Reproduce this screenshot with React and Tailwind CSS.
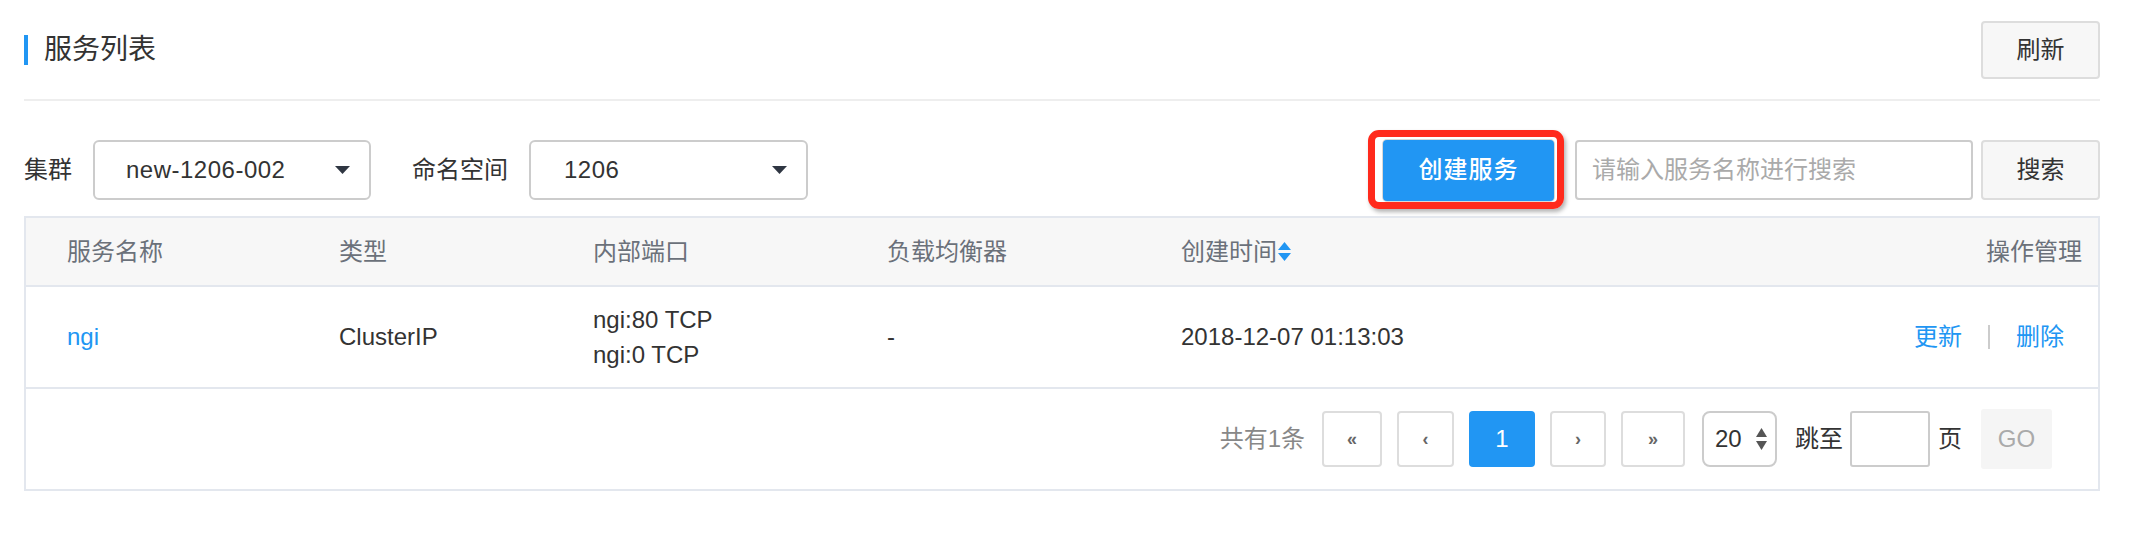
import React from "react";

const Caret = () => (
    <svg width="15" height="8" viewBox="0 0 15 8">
        <polygon points="0,0 15,0 7.5,8" fill="#2f3642" />
    </svg>
);

const SortIcon = () => (
    <svg width="13" height="20" viewBox="0 0 13 20" className="ml-[1px]">
        <polygon points="6.5,0 13,8 0,8" fill="#2196f3" />
        <polygon points="0,11 13,11 6.5,19" fill="#2196f3" />
    </svg>
);

const Spinner = () => (
    <svg width="11" height="22" viewBox="0 0 11 22">
        <polygon points="5.5,0 11,9 0,9" fill="#555" />
        <polygon points="0,13 11,13 5.5,22" fill="#555" />
    </svg>
);

const PageBtn = ({ children, w, active }) => (
    <div
        className={`h-[56px] flex items-center justify-center rounded-[4px] ${
            active
                ? "bg-[#2196f3] text-white text-[24px]"
                : "border-2 border-[#dddddd] text-[#666] text-[18px] font-bold"
        }`}
        style={{ width: w }}
    >
        {children}
    </div>
);

const App = () => {
    return (
        <div className="w-[2130px] h-[538px] bg-white pl-[24px] pr-[30px] font-['Liberation_Sans','Noto_Sans_CJK_SC',sans-serif] text-[#333]">
            {/* title */}
            <div className="flex items-center justify-between pt-[21px]">
                <div className="flex items-center">
                    <div className="w-[4px] h-[30px] bg-[#2196f3]" />
                    <h1 className="ml-[16px] text-[28px] leading-none text-[#333]">服务列表</h1>
                </div>
                <button className="w-[119px] h-[58px] bg-[#f7f7f7] border-2 border-[#dddddd] rounded-[4px] text-[24px] text-[#333]">
                    刷新
                </button>
            </div>
            <div className="mt-[20px] h-[2px] bg-[#eeeeee]" />

            {/* filters */}
            <div className="mt-[39px] h-[60px] flex items-center">
                <span className="text-[24px] leading-none">集群</span>
                <div className="ml-[21px] w-[278px] h-[60px] border-2 border-[#cccccc] rounded-[6px] flex items-center justify-between pl-[31px] pr-[19px]">
                    <span className="text-[24px] tracking-[0.5px]">new-1206-002</span>
                    <Caret />
                </div>
                <span className="ml-[41px] text-[24px] leading-none">命名空间</span>
                <div className="ml-[21px] w-[279px] h-[60px] border-2 border-[#cccccc] rounded-[6px] flex items-center justify-between pl-[33px] pr-[19px]">
                    <span className="text-[24px] tracking-[0.5px]">1206</span>
                    <Caret />
                </div>
                <div className="flex-1" />
                <div className="relative">
                    <button className="w-[171px] h-[61px] bg-[#2196f3] rounded-[4px] text-white text-[24px] font-medium tracking-[1px] shadow-[0_0_0_1px_#d8d8d8]">
                        创建服务
                    </button>
                    <div className="absolute -left-[15px] -top-[10px] -right-[10px] -bottom-[8px] border-[7px] border-[#ff2a1c] rounded-[11px] shadow-[2px_3px_4px_rgba(0,0,0,0.3)] pointer-events-none" />
                </div>
                <div className="ml-[21px] w-[398px] h-[60px] border-2 border-[#cccccc] rounded-[4px] flex items-center pl-[15px]">
                    <span className="text-[24px] text-[#aaaaaa]">请输入服务名称进行搜索</span>
                </div>
                <button className="ml-[8px] w-[119px] h-[60px] bg-[#f7f7f7] border-2 border-[#dddddd] rounded-[4px] text-[24px] text-[#333]">
                    搜索
                </button>
            </div>

            {/* table */}
            <div className="mt-[16px] border-2 border-[#e3e7ee]">
                <div className="h-[69px] bg-[#f7f7f7] border-b-2 border-[#e3e7ee] flex items-center pl-[41px] pr-[16px] text-[24px] text-[#6b717a]">
                    <div className="w-[272px]">服务名称</div>
                    <div className="w-[254px]">类型</div>
                    <div className="w-[294px]">内部端口</div>
                    <div className="w-[294px]">负载均衡器</div>
                    <div className="flex-1 flex items-center">
                        创建时间
                        <SortIcon />
                    </div>
                    <div>操作管理</div>
                </div>
                <div className="h-[102px] border-b-2 border-[#e3e7ee] flex items-center pl-[41px] pr-[34px] text-[24px]">
                    <div className="w-[272px] text-[#2196f3]">ngi</div>
                    <div className="w-[254px]">ClusterIP</div>
                    <div className="w-[294px] leading-[35px]">
                        <div>ngi:80 TCP</div>
                        <div>ngi:0 TCP</div>
                    </div>
                    <div className="w-[294px]">-</div>
                    <div className="flex-1">2018-12-07 01:13:03</div>
                    <div className="flex items-center text-[#2196f3]">
                        <span>更新</span>
                        <span className="mx-[26px] w-[2px] h-[24px] bg-[#cccccc]" />
                        <span>删除</span>
                    </div>
                </div>
                <div className="h-[100px] flex items-center justify-end pr-[46px] text-[24px]">
                    <span className="text-[#888888]">共有1条</span>
                    <div className="ml-[17px] flex items-center gap-[15px]">
                        <PageBtn w="60px">«</PageBtn>
                        <PageBtn w="57px">‹</PageBtn>
                        <PageBtn w="66px" active>1</PageBtn>
                        <PageBtn w="56px">›</PageBtn>
                        <PageBtn w="64px">»</PageBtn>
                    </div>
                    <div className="ml-[17px] w-[75px] h-[56px] border-2 border-[#cccccc] rounded-[8px] flex items-center justify-between pl-[11px] pr-[8px]">
                        <span className="text-[#333]">20</span>
                        <Spinner />
                    </div>
                    <span className="ml-[18px]">跳至</span>
                    <div className="ml-[7px] w-[80px] h-[56px] border-2 border-[#cccccc] rounded-[3px]" />
                    <span className="ml-[8px]">页</span>
                    <div className="ml-[19px] w-[71px] h-[60px] bg-[#f5f5f5] rounded-[3px] flex items-center justify-center text-[#aaaaaa]">
                        GO
                    </div>
                </div>
            </div>
        </div>
    );
};

export default App;
